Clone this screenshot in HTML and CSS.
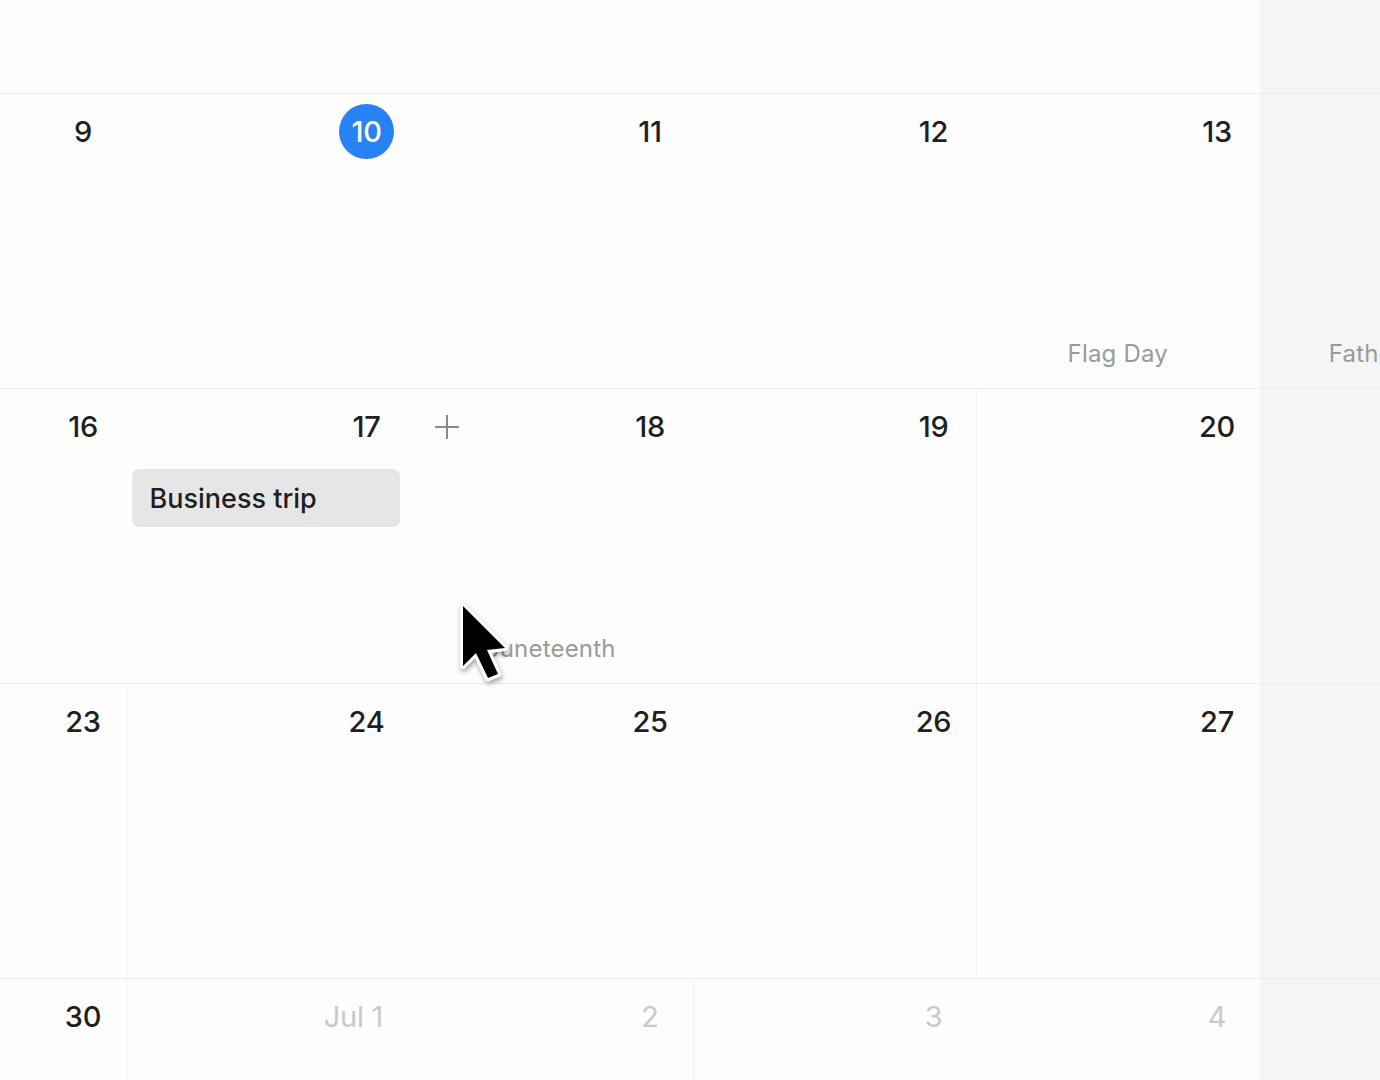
FILE: index.html
```html
<!DOCTYPE html>
<html>
<head>
<meta charset="utf-8">
<link rel="stylesheet" href="styles.css">
</head>
<body>
<div class="cal">
  <div class="week top">
    <div class="cell"></div><div class="cell"></div><div class="cell"></div><div class="cell"></div><div class="cell"></div><div class="cell"></div><div class="cell weekend"></div><div class="cell weekend"></div>
  </div>
  <div class="week">
    <div class="cell"></div>
    <div class="cell"><div class="head"><span class="num">9</span></div></div>
    <div class="cell"><div class="head"><span class="num today">10</span></div></div>
    <div class="cell"><div class="head"><span class="num">11</span></div></div>
    <div class="cell"><div class="head"><span class="num">12</span></div></div>
    <div class="cell"><div class="head"><span class="num">13</span></div><div class="holiday">Flag Day</div></div>
    <div class="cell weekend"><div class="holiday">Father's Day</div></div>
    <div class="cell weekend"></div>
  </div>
  <div class="week">
    <div class="cell"></div>
    <div class="cell"><div class="head"><span class="num">16</span></div></div>
    <div class="cell"><div class="head"><span class="num">17</span></div>
      <div class="event">Business trip</div></div>
    <div class="cell"><div class="head spread"><svg class="plus" width="26" height="26" viewBox="0 0 26 26"><path d="M13 1v24M1 13h24" stroke="#8a8a8a" stroke-width="2" fill="none"/></svg><span class="num">18</span></div><div class="holiday">Juneteenth</div></div>
    <div class="cell"><div class="head"><span class="num">19</span></div></div>
    <div class="cell vl"><div class="head"><span class="num">20</span></div></div>
    <div class="cell weekend"></div>
    <div class="cell weekend"></div>
  </div>
  <div class="week">
    <div class="cell"></div>
    <div class="cell"><div class="head"><span class="num">23</span></div></div>
    <div class="cell vl"><div class="head"><span class="num">24</span></div></div>
    <div class="cell"><div class="head"><span class="num">25</span></div></div>
    <div class="cell"><div class="head"><span class="num">26</span></div></div>
    <div class="cell vl"><div class="head"><span class="num">27</span></div></div>
    <div class="cell weekend"></div>
    <div class="cell weekend"></div>
  </div>
  <div class="week">
    <div class="cell"></div>
    <div class="cell"><div class="head"><span class="num">30</span></div></div>
    <div class="cell vl"><div class="head"><span class="num muted wide">Jul 1</span></div></div>
    <div class="cell"><div class="head"><span class="num muted">2</span></div></div>
    <div class="cell vl"><div class="head"><span class="num muted">3</span></div></div>
    <div class="cell"><div class="head"><span class="num muted">4</span></div></div>
    <div class="cell weekend"></div>
    <div class="cell weekend"></div>
  </div>
</div>
<svg class="cursor" width="70" height="100" viewBox="0 0 70 100">
  <defs>
    <filter id="sh" x="-30%" y="-30%" width="160%" height="160%">
      <feDropShadow dx="1" dy="3" stdDeviation="2.5" flood-color="#000" flood-opacity="0.35"/>
    </filter>
  </defs>
  <path d="M23 16 L23 76 L36 63 L48 88 L58 84 L47 60 L65 58 Z" fill="#000" stroke="#fff" stroke-width="6" stroke-linejoin="round" filter="url(#sh)"/>
  <path d="M23 16 L23 76 L36 63 L48 88 L58 84 L47 60 L65 58 Z" fill="#000"/>
</svg>
</body>
</html>
```

FILE: styles.css
```css
html, body {
  margin: 0;
  padding: 0;
  background: #fdfdfd;
  overflow: hidden;
  width: 1380px;
  height: 1080px;
}
body {
  font-family: Inter, "Noto Sans", "Liberation Sans", sans-serif;
  color: #1f1f1f;
  position: relative;
}
.cal {
  margin-left: -441.5px;
  width: 2268px;
}
.week {
  display: grid;
  grid-template-columns: repeat(8, 283.5px);
  height: 294px;
  border-top: 1px solid #ececec;
}
.week.top {
  height: 93px;
  border-top: none;
}
.cell {
  display: flex;
  flex-direction: column;
  padding-top: 10px;
  box-sizing: border-box;
  min-width: 0;
}
.cell.vl {
  box-shadow: inset 1px 0 0 #f1f1f1;
}
.cell.weekend {
  background: #f5f5f5;
}
.head {
  display: flex;
  justify-content: flex-end;
  align-items: center;
  padding-right: 15px;
}
.head.spread {
  justify-content: space-between;
  padding-left: 25px;
}
.num {
  width: 55px;
  height: 55px;
  border-radius: 50%;
  display: flex;
  align-items: center;
  justify-content: center;
  font-size: 29px;
  font-weight: 500;
  letter-spacing: -0.3px;
  white-space: nowrap;
}
.num.today {
  background: #2783f1;
  color: #fff;
}
.num.muted {
  color: #c9c9c9;
  font-weight: 400;
}
.num.wide {
  justify-content: flex-end;
  padding-right: 11px;
  box-sizing: border-box;
}
.plus {
  display: block;
}
.holiday {
  margin-top: auto;
  padding-bottom: 21px;
  text-align: center;
  font-size: 24px;
  line-height: 26px;
  letter-spacing: 0.2px;
  color: #9a9a9a;
  white-space: nowrap;
}
.event {
  margin: 15px 9px 0 6px;
  height: 58px;
  border-radius: 7px;
  background: #e6e6e6;
  display: flex;
  align-items: center;
  padding-left: 18px;
  font-size: 27px;
  font-weight: 500;
  color: #1f1f1f;
}
.cursor {
  position: absolute;
  left: 440px;
  top: 590px;
}
```
